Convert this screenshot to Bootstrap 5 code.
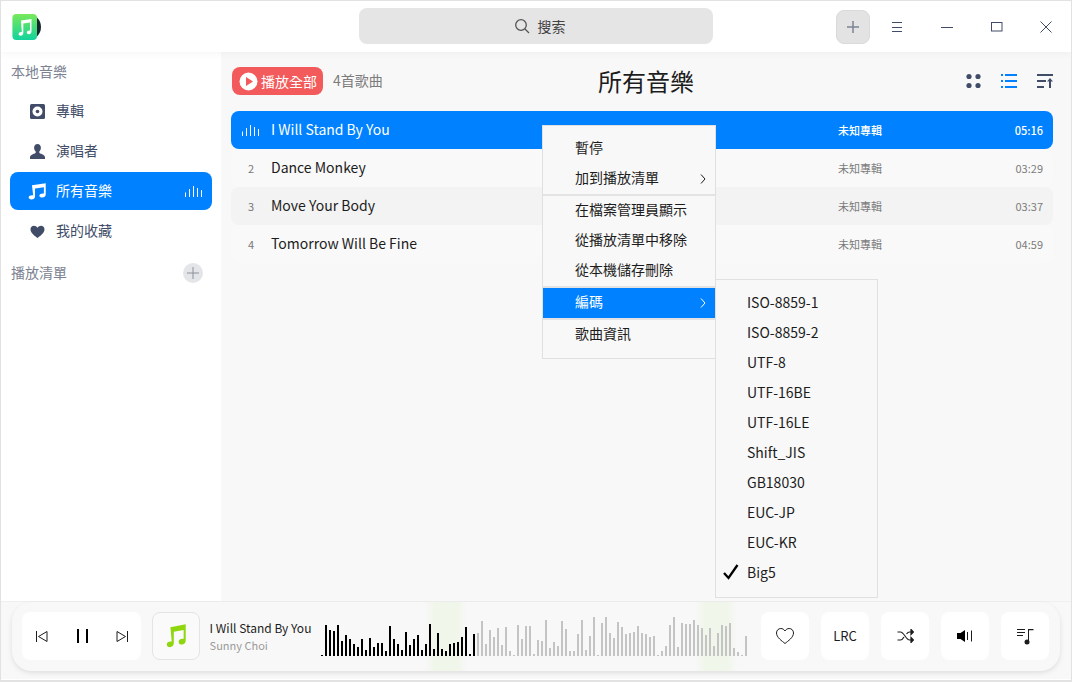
<!DOCTYPE html>
<html lang="zh-Hant">
<head>
    <meta charset="UTF-8">
    <title>所有音樂</title>
    <link href="https://cdn.jsdelivr.net/npm/bootstrap@5.3.0/dist/css/bootstrap.min.css" rel="stylesheet">
    <style>
        body { margin: 0; overflow: hidden; background: #fff; font-family: "Noto Sans CJK TC", "Noto Sans", sans-serif; color: #1c1c1c; }
        svg { display: block; flex: none; }

        .app-shell { position: relative; width: 1072px; height: 682px; border: 1px solid #e2e2e2; border-bottom-width: 2px; overflow: hidden; }

        /* title bar */
        .title-bar { position: relative; z-index: 2; height: 51px; padding-left: 11px; background: #fff; box-shadow: 0 2px 8px rgba(0,0,0,.04); }
        .search-box { position: absolute; left: 358px; top: 7px; width: 354px; height: 36px; padding-left: 7px; border-radius: 8px; background: #e5e5e5; font-size: 14px; color: #444; gap: 8px; }
        .add-btn { width: 34px; height: 34px; border-radius: 8px; background: #e3e3e3; border: 1px solid #dadada; margin-right: 1px; }
        .win-btn { width: 50px; height: 51px; padding-left: 2px; color: #414d68; }
        .win-btn:last-child { padding-left: 0; }

        /* sidebar */
        .body-row { height: 549px; }
        .side-panel { width: 220px; background: #fff; padding: 9px 9px 0; }
        .side-head { font-size: 14px; color: #7c8291; height: 21px; line-height: 21px; padding-left: 1px; }
        .side-item { height: 38px; margin-bottom: 2px; padding: 0 9px 0 18px; border-radius: 8px; font-size: 14px; color: #414d68; gap: 10px; }
        .side-item span { padding-bottom: 2px; }
        .side-item.is-active { background: #0081ff; color: #fff; }
        .side-list { margin-top: 10px; }
        .side-foot { margin-top: 12px; }
        .round-add { width: 20px; height: 20px; border-radius: 50%; background: #e4e5e8; margin-right: 9px; }

        /* song list */
        .main-panel { background: #f8f8f8; padding: 15px 18px 0 10px; }
        .list-head { position: relative; height: 30px; margin: 0 0 14px 1px; }
        .play-all { height: 28px; width: 91px; margin-bottom: 2px; border-radius: 8px; background: #f25a5b; color: #fff; font-size: 14px; padding-left: 7px; gap: 3px; }
        .song-count { font-size: 14px; color: #7c7c7c; margin-left: 10px; padding-bottom: 3px; }
        .page-title { position: absolute; left: 0; right: 0; top: -3px; margin-left: 7px; text-align: center; font-size: 24px; line-height: 34px; color: #1c1c1c; }
        .view-btns { gap: 17px; margin-bottom: 2px; }
        .song-row { height: 38px; border-radius: 8px; font-size: 14px; color: #1c1c1c; background: #f9f9f9; }
        .song-row.is-alt { background: #f3f3f3; }
        .song-row.is-playing { background: #0081ff; color: #fff; }
        .song-no { width: 40px; text-align: center; font-size: 11px; color: #777; flex: none; }
        .song-name { flex: 1; padding-bottom: 1px; }
        .song-album { width: 165px; font-size: 11px; color: #7c7c7c; flex: none; }
        .song-time { width: 40px; margin-right: 10px; text-align: right; font-size: 11px; color: #7c7c7c; flex: none; }
        .is-playing .song-no { color: #fff; }
        .is-playing .song-album, .is-playing .song-time { color: #fff; font-weight: 500; }

        /* right click menus */
        .ctx-menu { position: absolute; z-index: 5; background: #f8f8f8; border: 1px solid #e0e0e0; font-size: 14px; color: #1c1c1c; }
        .ctx-main { left: 541px; top: 124px; width: 174px; height: 234px; padding-top: 8px; }
        .ctx-sub { left: 714px; top: 278px; width: 163px; height: 319px; padding-top: 8px; z-index: 6; }
        .ctx-item { position: relative; height: 30px; padding: 0 0 4px 32px; }
        .ctx-sub .ctx-item { padding: 0 0 2px 31px; }
        .ctx-item.is-open { background: #0081ff; color: #fff; }
        .ctx-line { height: 2px; background: #e3e3e3; }
        .ctx-arrow { position: absolute; right: 9px; top: 10px; }
        .ctx-check { position: absolute; left: 7px; top: 6px; }

        /* player */
        .player-wrap { height: 78px; background: #f8f8f8; border-top: 1px solid #efefef; padding: 0 11px; }
        .player-card { height: 69px; border-radius: 20px; background: #f8f8f8; box-shadow: 0 2px 5px rgba(0,0,0,.1); padding: 10px 11px 0 10px; }
        .ctrl-box { width: 119px; height: 48px; background: #fff; border-radius: 8px; padding: 0 12px 0 13px; }
        .cover-box { width: 48px; height: 48px; background: #fafafa; border: 1px solid #e4e4e4; border-radius: 8px; margin-left: 11px; }
        .track-info { width: 112px; margin-left: 10px; padding-top: 7px; }
        .track-name { font-size: 12px; line-height: 17px; color: #1c1c1c; }
        .track-artist { font-size: 11px; line-height: 16px; color: #9a9a9a; margin-top: 1px; }
        .wave-box { width: 438px; height: 69px; margin-top: -10px; padding: 0 0 15px 0; gap: 2px;
            background:
                linear-gradient(90deg, transparent 104px, #f0f6ea 114px, #f0f6ea 136px, transparent 146px) no-repeat,
                linear-gradient(90deg, transparent 374px, #f0f6ea 384px, #f0f6ea 406px, transparent 416px) no-repeat; }
        .wave-bar { width: 2px; background: #c4c4c4; flex: none; }
        .wave-bar.is-done { background: #000; }
        .tool-btn { width: 48px; height: 48px; background: #fff; border-radius: 8px; font-size: 13px; color: #1c1c1c; }
        .tool-group { gap: 12px; margin-left: 3px; }
    </style>
</head>
<body>

<svg width="0" height="0" style="position:absolute">
    <symbol id="i-note" viewBox="2.600 1.400 13.600 16.500" preserveAspectRatio="none"><path fill="currentColor" d="M5.600 3.600 16 1.600v11.300c0 1.500-1.200 2.600-2.700 2.600-1.200 0-2.100-.7-2.100-1.800 0-1.200 1.200-2.100 2.600-2.100.3 0 .6 0 .8.1V5.500l-6.700 1.300v7.900c0 1.500-1.200 2.600-2.700 2.600-1.200 0-2.100-.7-2.100-1.800 0-1.200 1.200-2.100 2.600-2.100.3 0 .6 0 .8.100z"/></symbol>
    <symbol id="i-bars" viewBox="0 0 18 11"><path stroke="currentColor" fill="none" d="M.5 11V6.500M4.500 11V3M8.500 11V0M12.500 11V2M16.500 11V4"/></symbol>
</svg>

<div class="app-shell">
    <!-- title bar -->
    <div class="title-bar d-flex align-items-center">
        <svg width="30" height="28" viewBox="0 0 30 28">
            <defs><linearGradient id="logoFill" x1="0" y1="0" x2="0" y2="1"><stop offset="0" stop-color="#79e95a"/><stop offset="1" stop-color="#12d39c"/></linearGradient></defs>
            <circle cx="16" cy="14" r="13" fill="#17242a"/>
            <rect x=".4" y="1" width="24.600" height="26" rx="4" fill="url(#logoFill)"/>
            <path fill="#fff" d="M9 7.500 19.500 6v12.600c0 1.600-1.200 2.600-2.700 2.600-1.200 0-2-.7-2-1.700 0-1.200 1.200-2 2.600-2 .2 0 .4 0 .6.100V9.500l-6.700 1v9.600c0 1.600-1.200 2.600-2.700 2.600-1.200 0-2-.7-2-1.700 0-1.200 1.200-2 2.600-2 .2 0 .4 0 .6.100z"/>
        </svg>
        <div class="search-box d-flex align-items-center justify-content-center">
            <svg width="16" height="16" viewBox="0 0 16 16" fill="none" stroke="#555" stroke-width="1.300"><circle cx="7" cy="7" r="5.300"/><path d="m11 11 4 4"/></svg>
            <span>搜索</span>
        </div>
        <div class="ms-auto d-flex align-items-center">
            <div class="add-btn d-flex align-items-center justify-content-center">
                <svg width="14" height="14" viewBox="0 0 14 14" stroke="#7c8494" stroke-width="1.500"><path d="M7 1v12M1 7h12"/></svg>
            </div>
            <div class="win-btn d-flex align-items-center justify-content-center">
                <svg width="12" height="12" viewBox="0 0 12 12" stroke="currentColor"><path d="M1 1.500h10M1 6.500h10M1 10.500h10"/></svg>
            </div>
            <div class="win-btn d-flex align-items-center justify-content-center">
                <svg width="12" height="12" viewBox="0 0 12 12" stroke="currentColor"><path d="M0 6.500h12"/></svg>
            </div>
            <div class="win-btn d-flex align-items-center justify-content-center">
                <svg width="12" height="10" viewBox="0 0 12 10" fill="none" stroke="currentColor"><rect x=".5" y=".5" width="10.500" height="8.500"/></svg>
            </div>
            <div class="win-btn d-flex align-items-center justify-content-center">
                <svg width="12" height="12" viewBox="0 0 12 12" stroke="currentColor"><path d="m.5.5 11 11M11.500.5l-11 11"/></svg>
            </div>
        </div>
    </div>

    <div class="body-row d-flex">
        <!-- sidebar -->
        <div class="side-panel flex-shrink-0">
            <div class="side-head">本地音樂</div>
            <div class="side-list">
                <div class="side-item d-flex align-items-center">
                    <svg width="18" height="17" viewBox="-1 0 18 17"><rect x="1" y="1" width="15" height="15" rx="1.500" fill="#414d68"/><circle cx="8.500" cy="8.500" r="5" fill="#fff"/><circle cx="8.500" cy="8.500" r="1.800" fill="#414d68"/></svg>
                    <span>專輯</span>
                </div>
                <div class="side-item d-flex align-items-center">
                    <svg width="18" height="17" viewBox="-1 0 18 17" fill="#414d68"><path d="M8.500 1c2 0 3.400 1.600 3.400 3.800 0 1.700-.8 3-1.600 3.800v1.200c0 .8 5.700 1.700 5.700 4.400V16H1v-1.800c0-2.700 5.700-3.600 5.700-4.400V8.600C5.900 7.800 5.100 6.500 5.100 4.800 5.100 2.600 6.500 1 8.500 1z"/></svg>
                    <span>演唱者</span>
                </div>
                <div class="side-item is-active d-flex align-items-center">
                    <svg width="18" height="17"><use href="#i-note"/></svg>
                    <span class="flex-grow-1">所有音樂</span>
                    <svg width="18" height="11"><use href="#i-bars"/></svg>
                </div>
                <div class="side-item d-flex align-items-center">
                    <svg width="18" height="17" viewBox="-1 0 18 17" fill="#414d68"><path d="M8.500 15C6 13 1.500 10 1.500 6.200 1.500 4 3.100 2.700 4.900 2.700c1.500 0 2.800.8 3.600 2.100.8-1.300 2.100-2.100 3.600-2.100 1.800 0 3.400 1.300 3.400 3.500C15.500 10 11 13 8.500 15z"/></svg>
                    <span>我的收藏</span>
                </div>
            </div>
            <div class="side-head side-foot d-flex align-items-center justify-content-between">
                <span>播放清單</span>
                <div class="round-add d-flex align-items-center justify-content-center">
                    <svg width="12" height="12" viewBox="0 0 12 12" stroke="#8a909c"><path d="M6 0v12M0 6h12"/></svg>
                </div>
            </div>
        </div>

        <!-- song list -->
        <div class="main-panel flex-grow-1">
            <div class="list-head d-flex align-items-center">
                <div class="play-all d-flex align-items-center">
                    <svg width="19" height="19" viewBox="0 0 19 19"><circle cx="9.500" cy="9.500" r="9" fill="#fff"/><path d="M7 5l7 4.500-7 4.500z" fill="#f25a5b"/></svg>
                    <span>播放全部</span>
                </div>
                <span class="song-count">4首歌曲</span>
                <div class="page-title">所有音樂</div>
                <div class="view-btns ms-auto d-flex align-items-center">
                    <svg width="18" height="16" viewBox="0 0 18 16" fill="#414d68"><circle cx="4" cy="3.500" r="2.600"/><circle cx="13" cy="3.500" r="2.600"/><circle cx="4" cy="12.500" r="2.600"/><circle cx="13" cy="12.500" r="2.600"/></svg>
                    <svg width="18" height="16" viewBox="0 0 18 16" fill="#0081ff"><rect x="1" y="1" width="2" height="2"/><rect x="5" y="1" width="12" height="2"/><rect x="1" y="7" width="2" height="2"/><rect x="5" y="7" width="12" height="2"/><rect x="1" y="13" width="2" height="2"/><rect x="5" y="13" width="12" height="2"/></svg>
                    <svg width="18" height="16" viewBox="0 0 18 16" fill="#414d68"><rect x="2" y="1" width="16" height="2"/><rect x="2" y="7" width="9" height="2"/><rect x="2" y="13" width="7" height="2"/><path d="M15 5l3 3.500h-2V15h-2V8.500h-2z"/></svg>
                </div>
            </div>

            <div class="song-row is-playing d-flex align-items-center">
                <div class="song-no d-flex justify-content-center"><svg width="18" height="11"><use href="#i-bars"/></svg></div>
                <div class="song-name">I Will Stand By You</div>
                <div class="song-album">未知專輯</div>
                <div class="song-time">05:16</div>
            </div>
            <div class="song-row d-flex align-items-center">
                <div class="song-no">2</div>
                <div class="song-name">Dance Monkey</div>
                <div class="song-album">未知專輯</div>
                <div class="song-time">03:29</div>
            </div>
            <div class="song-row is-alt d-flex align-items-center">
                <div class="song-no">3</div>
                <div class="song-name">Move Your Body</div>
                <div class="song-album">未知專輯</div>
                <div class="song-time">03:37</div>
            </div>
            <div class="song-row d-flex align-items-center">
                <div class="song-no">4</div>
                <div class="song-name">Tomorrow Will Be Fine</div>
                <div class="song-album">未知專輯</div>
                <div class="song-time">04:59</div>
            </div>
        </div>
    </div>

    <!-- player -->
    <div class="player-wrap">
        <div class="player-card d-flex">
            <div class="ctrl-box d-flex align-items-center justify-content-between">
                <svg width="13" height="13" viewBox="0 0 13 13" fill="none" stroke="#1c1c1c"><path d="M1.500 1v11M12 1.500v10L3.500 6.500z"/></svg>
                <svg width="14" height="16" viewBox="0 0 14 16" fill="#000"><rect x="2" y="1" width="2" height="14"/><rect x="11" y="1" width="2" height="14"/></svg>
                <svg width="13" height="13" viewBox="0 0 13 13" fill="none" stroke="#1c1c1c"><path d="M11.500 1v11M1 1.500v10l8.500-5z"/></svg>
            </div>
            <div class="cover-box d-flex align-items-center justify-content-center">
                <svg width="20" height="24" color="#8fd60f"><use href="#i-note"/></svg>
            </div>
            <div class="track-info">
                <div class="track-name">I Will Stand By You</div>
                <div class="track-artist">Sunny Choi</div>
            </div>
            <div class="wave-box d-flex align-items-end" id="wave"></div>
            <div class="tool-group d-flex">
                <div class="tool-btn d-flex align-items-center justify-content-center">
                    <svg width="20" height="18" viewBox="0 0 20 18" fill="none" stroke="#1c1c1c"><path d="M10 16.500C7 14 1.500 10.500 1.500 6 1.500 3.300 3.500 1.500 5.800 1.500c1.800 0 3.300 1 4.200 2.500.9-1.500 2.400-2.500 4.200-2.500 2.300 0 4.300 1.800 4.300 4.500 0 4.500-5.500 8-8.500 10.500z"/></svg>
                </div>
                <div class="tool-btn d-flex align-items-center justify-content-center">LRC</div>
                <div class="tool-btn d-flex align-items-center justify-content-center">
                    <svg width="17" height="14" viewBox="0 0 17 14" fill="none" stroke="#1c1c1c" stroke-width="1.200"><path d="M.5 3h3c3.500 0 5.500 8 9 8h2M.5 11h3c1.500 0 2.600-1.500 3.500-3M9.500 5c.9-1.200 1.800-2 3-2h2"/><path d="M14 .5 16.500 3 14 5.500zM14 8.500l2.500 2.500-2.500 2.500z" fill="#1c1c1c"/></svg>
                </div>
                <div class="tool-btn d-flex align-items-center justify-content-center">
                    <svg width="16" height="14" viewBox="0 0 16 14"><path d="M0 4h3.500L8 1v12L3.500 10H0z" fill="#000"/><path d="M10.500 3v8M14.500 1.500v11" stroke="#1c1c1c" fill="none"/></svg>
                </div>
                <div class="tool-btn d-flex align-items-center justify-content-center">
                    <svg width="17" height="17" viewBox="0 0 17 17" fill="#1c1c1c"><rect x="0" y="1" width="8" height="1"/><rect x="0" y="4" width="8" height="1"/><rect x="0" y="7" width="6" height="1"/><path d="M11 1h5.500v1.200H12V13h-1z"/><circle cx="10" cy="14" r="2.500"/></svg>
                </div>
            </div>
        </div>
    </div>

    <!-- context menu -->
    <div class="ctx-menu ctx-main">
        <div class="ctx-item d-flex align-items-center">暫停</div>
        <div class="ctx-item d-flex align-items-center">加到播放清單
            <svg class="ctx-arrow" width="6" height="10" viewBox="0 0 6 10" fill="none" stroke="#1c1c1c"><path d="m1 .5 4 4.500-4 4.500"/></svg>
        </div>
        <div class="ctx-line"></div>
        <div class="ctx-item d-flex align-items-center">在檔案管理員顯示</div>
        <div class="ctx-item d-flex align-items-center">從播放清單中移除</div>
        <div class="ctx-item d-flex align-items-center">從本機儲存刪除</div>
        <div class="ctx-line"></div>
        <div class="ctx-item is-open d-flex align-items-center">編碼
            <svg class="ctx-arrow" width="6" height="10" viewBox="0 0 6 10" fill="none" stroke="#fff"><path d="m1 .5 4 4.500-4 4.500"/></svg>
        </div>
        <div class="ctx-line"></div>
        <div class="ctx-item d-flex align-items-center">歌曲資訊</div>
    </div>
    <div class="ctx-menu ctx-sub">
        <div class="ctx-item d-flex align-items-center">ISO-8859-1</div>
        <div class="ctx-item d-flex align-items-center">ISO-8859-2</div>
        <div class="ctx-item d-flex align-items-center">UTF-8</div>
        <div class="ctx-item d-flex align-items-center">UTF-16BE</div>
        <div class="ctx-item d-flex align-items-center">UTF-16LE</div>
        <div class="ctx-item d-flex align-items-center">Shift_JIS</div>
        <div class="ctx-item d-flex align-items-center">GB18030</div>
        <div class="ctx-item d-flex align-items-center">EUC-JP</div>
        <div class="ctx-item d-flex align-items-center">EUC-KR</div>
        <div class="ctx-item d-flex align-items-center">
            <svg class="ctx-check" width="16" height="16" viewBox="0 0 16 16" fill="none" stroke="#000" stroke-width="2.300"><path d="m1 9 4.500 5L14.500 1"/></svg>
            Big5
        </div>
    </div>
</div>

<script>
    // bar heights read off the waveform, first 39 are the played part
    var heights = [1,31,26,25,31,15,21,17,12,9,17,6,18,9,13,13,5,30,17,12,6,24,11,17,21,6,12,32,7,23,7,5,12,13,14,19,29,2,22,
        23,35,12,26,19,28,11,29,5,1,31,17,30,30,2,16,15,36,8,14,10,35,27,5,5,22,36,6,20,39,1,33,39,23,18,34,29,22,23,24,30,23,22,19,20,1,5,10,31,39,9,33,32,32,36,31,28,21,28,10,23,31,30,33,8,4,1,20];
    var wave = document.getElementById("wave");
    heights.forEach(function (h, i) {
        var bar = document.createElement("div");
        bar.className = i < 39 ? "wave-bar is-done" : "wave-bar";
        bar.style.height = h + "px";
        wave.appendChild(bar);
    });
</script>
<script src="https://cdn.jsdelivr.net/npm/bootstrap@5.3.0/dist/js/bootstrap.bundle.min.js"></script>
</body>
</html>
